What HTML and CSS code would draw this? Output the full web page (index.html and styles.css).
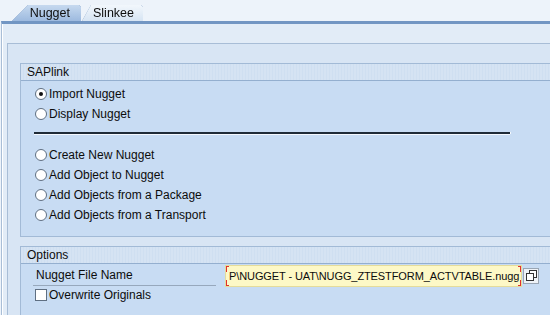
FILE: index.html
```html
<!DOCTYPE html>
<html>
<head>
<meta charset="utf-8">
<link rel="stylesheet" href="styles.css">
</head>
<body>
<div class="tabs">
  <div class="tab active"><span>Nugget</span></div>
  <div class="tab"><span>Slinkee</span></div>
</div>
<div class="panel">
  <div class="inner">
    <div class="group g1">
      <div class="ghead">SAPlink</div>
      <div class="gbody">
        <div class="row"><span class="radio on"></span><span>Import Nugget</span></div>
        <div class="row"><span class="radio"></span><span>Display Nugget</span></div>
        <div class="sep"></div>
        <div class="row"><span class="radio"></span><span>Create New Nugget</span></div>
        <div class="row"><span class="radio"></span><span>Add Object to Nugget</span></div>
        <div class="row"><span class="radio"></span><span>Add Objects from a Package</span></div>
        <div class="row"><span class="radio"></span><span>Add Objects from a Transport</span></div>
      </div>
    </div>
    <div class="group g2">
      <div class="ghead">Options</div>
      <div class="gbody2">
        <div class="frow">
          <span class="flabel">Nugget File Name</span>
          <span class="field"><span class="fv">P\NUGGET - UAT\NUGG_ZTESTFORM_ACTVTABLE.nugg</span>
            <i class="c tl"></i><i class="c bl"></i><i class="c tr"></i><i class="c br"></i></span>
          <span class="btn"><svg width="13" height="13" viewBox="0 0 13 13"><rect x="4.5" y="1.5" width="7" height="7" fill="#fff" stroke="#333"/><rect x="1.5" y="4.5" width="7" height="7" fill="#fff" stroke="#333"/></svg></span>
        </div>
        <div class="row crow"><span class="check"></span><span>Overwrite Originals</span></div>
      </div>
    </div>
  </div>
</div>
</body>
</html>
```
FILE: styles.css
```css
* { box-sizing: border-box; }
html, body { margin: 0; padding: 0; }
body {
  width: 550px; height: 315px; overflow: hidden;
  background: #edf3fa;
  font-family: "Liberation Sans", Arial, sans-serif;
  font-size: 12px; color: #0c0c0c;
}
.tabs {
  height: 21px; display: flex; align-items: flex-end;
  padding-left: 12px;
  filter: drop-shadow(0 0 0.6px #5f84b3);
}
.tab {
  height: 16px; width: 61px;
  background: linear-gradient(#f2f7fc, #d6e4f3);
  clip-path: polygon(9px 0, calc(100% - 2px) 0, 100% 2px, 100% 100%, 0 100%);
  display: flex; align-items: center; justify-content: flex-end;
  padding-right: 9px; font-size: 12.5px;
}
.tab.active {
  width: 69px; padding-right: 11px;
  background: linear-gradient(#c6d9ef, #9dbadf);
  clip-path: polygon(16px 0, calc(100% - 2px) 0, 100% 2px, 100% 100%, 0 100%);
  margin-right: 1px;
}
.tab span { line-height: 16px; }
.panel {
  border-top: 3px solid #7296c3;
  margin-left: 1px;
  border-left: 1px solid #a9bed7;
  box-shadow: inset 1px 0 0 #fff;
  background: #e2ecf7;
  padding: 19px 0 0 5px;
  height: 294px;
}
.inner {
  border-top: 1px solid #a8bdd6;
  border-left: 1px solid #a8bdd6;
  background: #d8e5f4;
  padding: 19px 0 0 12px;
  height: 100%;
}
.group {
  border: 1px solid #a2bad6;
  border-right: none;
  background: #c8dcf3;
}
.ghead {
  height: 17px; line-height: 16px;
  padding-left: 6px; font-size: 12px;
  background: repeating-linear-gradient(90deg, #d5e3f3 0 2px, #cfdff1 2px 3px);
  border-bottom: 1px solid #94afcf;
}
.gbody { padding: 3px 0 11px 14px; }
.row { height: 20px; display: flex; align-items: center; gap: 2px; }
.radio {
  width: 12px; height: 12px; border-radius: 50%;
  background: #fff; border: 1px solid #5f6f82;
  display: inline-flex; align-items: center; justify-content: center;
  flex: none;
}
.radio.on::after {
  content: ""; width: 4px; height: 4px; border-radius: 50%; background: #111;
}
.sep {
  width: 476px; height: 2px; background: #1f2b37;
  box-shadow: 0 1px 0 #f4f8fd, 1px 0 0 #f4f8fd;
  margin: 8px 0 11px -1px;
}
.g2 { margin-top: 9px; }
.gbody2 { padding: 0 0 10px 12px; }
.frow { height: 23px; display: flex; align-items: center; }
.flabel {
  width: 183px; height: 20px; line-height: 19px;
  padding-left: 3px;
  border-bottom: 1px solid #97a8bc;
  margin-top: 1px;
}
.field {
  position: relative; margin-left: 9px;
  width: 297px; height: 22px;
  background: #fdf8c6;
  border: 1px solid #e5dc9a;
  display: flex; align-items: center; padding-left: 3px;
  font-size: 11px; letter-spacing: -0.1px;
  white-space: nowrap; overflow: hidden;
}
.c { position: absolute; width: 4px; height: 7px; border-color: #e03030; border-style: solid; border-width: 0; }
.tl { left: -1px; top: -1px; border-left-width: 2px; border-top-width: 2px; }
.bl { left: -1px; bottom: -1px; border-left-width: 2px; border-bottom-width: 2px; }
.tr { right: -1px; top: -1px; border-right-width: 2px; border-top-width: 2px; }
.br { right: -1px; bottom: -1px; border-right-width: 2px; border-bottom-width: 2px; }
.btn {
  width: 16px; height: 16px; margin-left: 1px;
  border: 1px solid #9aa6b4; background: #eef2f7;
  display: flex; align-items: center; justify-content: center;
}
.crow { padding-left: 2px; margin-top: -2px; }
.check {
  width: 12px; height: 12px; background: #fff; border: 1px solid #5f6f82; flex: none;
}
```
